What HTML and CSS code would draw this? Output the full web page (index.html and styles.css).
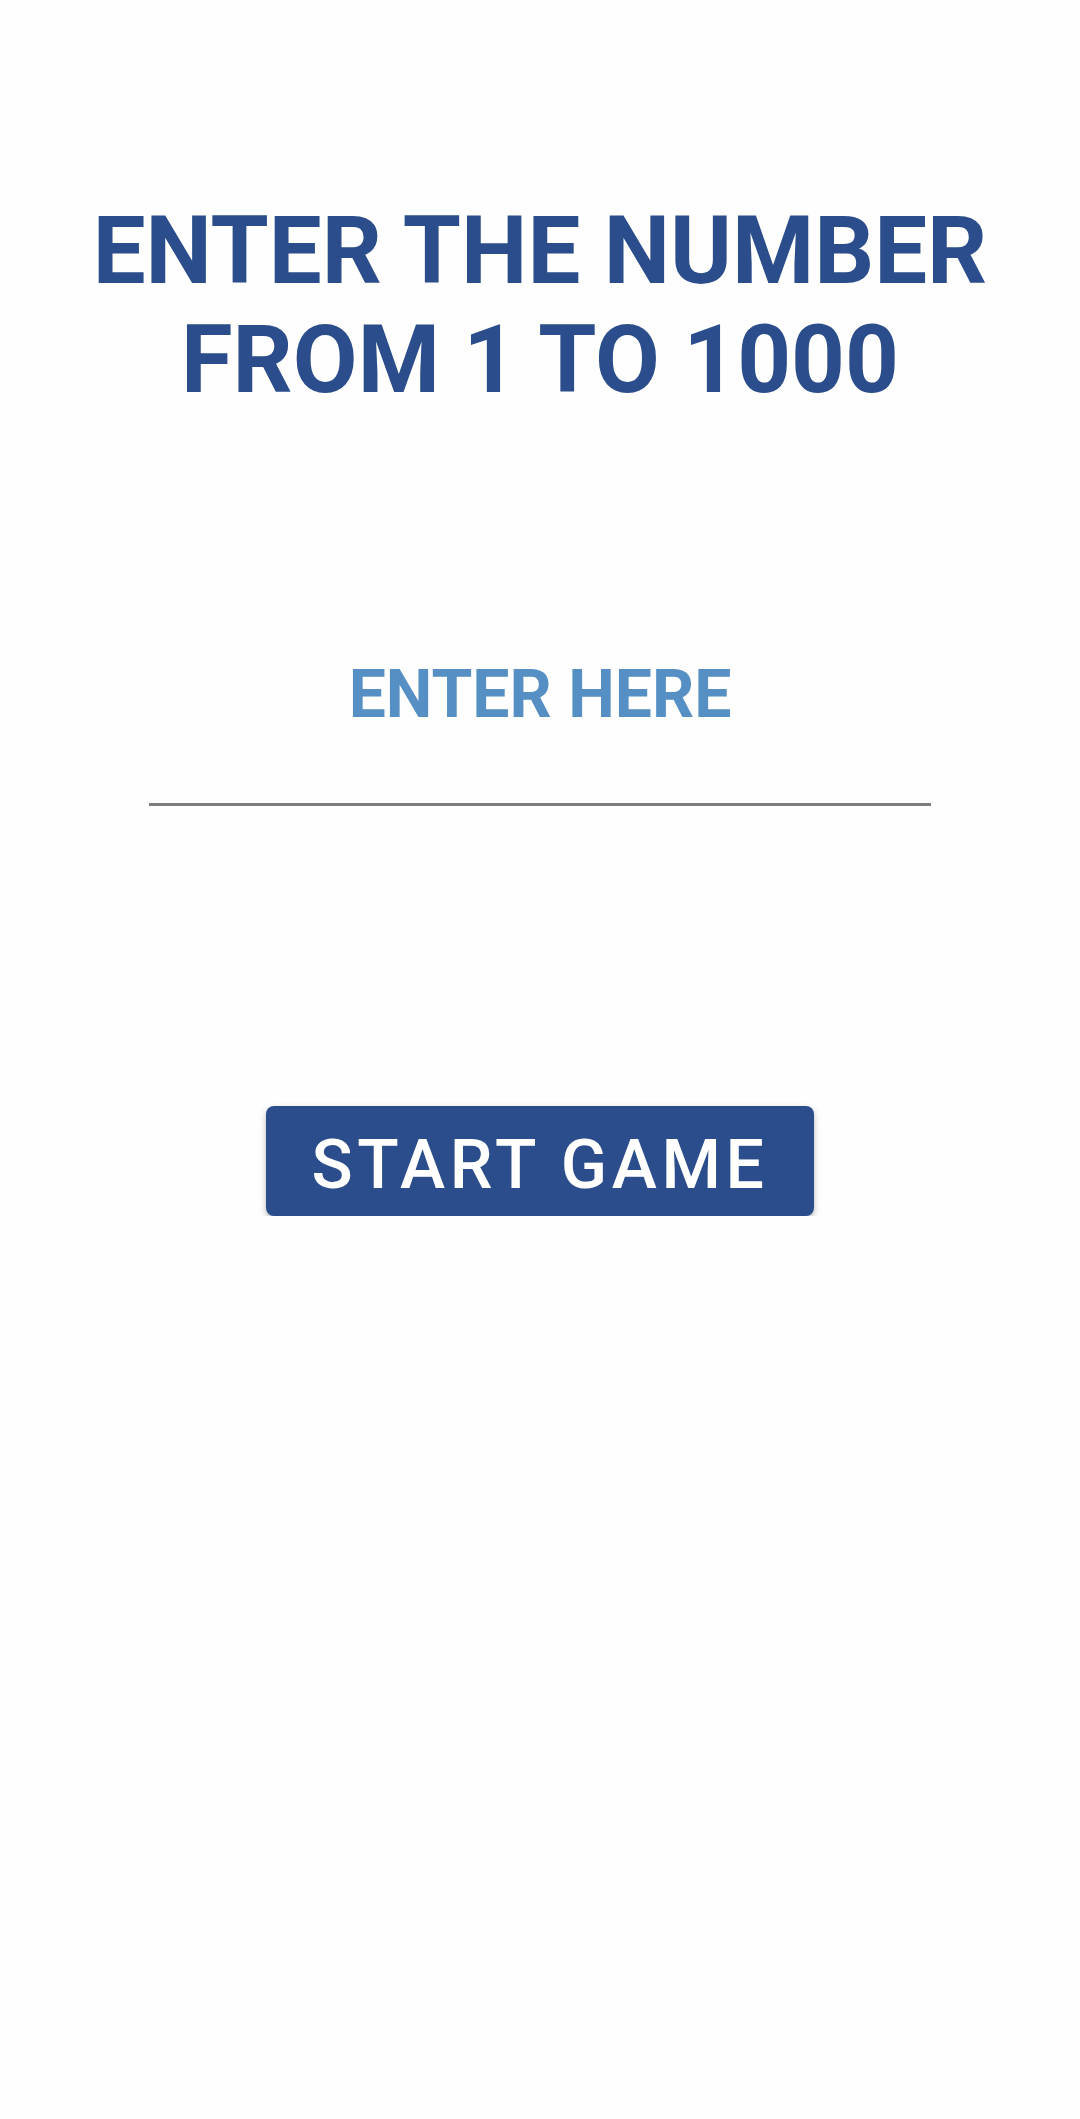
FILE: index.html
```html
<!DOCTYPE html>
<html lang="en">
<head>
  <meta charset="UTF-8">
  <title>Guess the number</title>
  <link rel="stylesheet" href="styles.css">
</head>
<body>
  <main class="screen">
    <h1 class="prompt">ENTER THE NUMBER FROM 1 TO 1000</h1>

    <input class="guess" type="text" inputmode="numeric" placeholder="ENTER HERE">

    <button class="start">START GAME</button>
  </main>
</body>
</html>
```

FILE: styles.css
```css
body {
  margin: 0;
  background: #fefefe;
  font-family: Roboto, "Liberation Sans", sans-serif;
}
.screen {
  display: flex;
  flex-direction: column;
  align-items: center;
  padding: 0 40px;
}
.prompt {
  margin: 197px 0 0;
  font-size: 94px;
  line-height: 109px;
  font-weight: 700;
  text-align: center;
  color: #2b4d8b;
}
.guess {
  box-sizing: content-box;
  width: 782px;
  height: 78px;
  margin-top: 218px;
  padding: 23px 0 69px;
  border: none;
  border-bottom: 3px solid #7d7d7d;
  background: none;
  outline: none;
  font-family: inherit;
  font-size: 66px;
  line-height: 78px;
  font-weight: 700;
  text-align: center;
  color: #2b4d8b;
}
.guess::placeholder {
  color: #558fc4;
  opacity: 1;
}
.start {
  width: 548px;
  height: 110px;
  margin-top: 300px;
  padding: 8px 0 0;
  border: none;
  border-radius: 8px;
  background: #2b4d8b;
  box-shadow: 0 3px 6px rgba(0, 0, 0, 0.28);
  font-family: inherit;
  font-size: 68px;
  font-weight: 500;
  letter-spacing: 4.6px;
  color: #fff;
}
```
